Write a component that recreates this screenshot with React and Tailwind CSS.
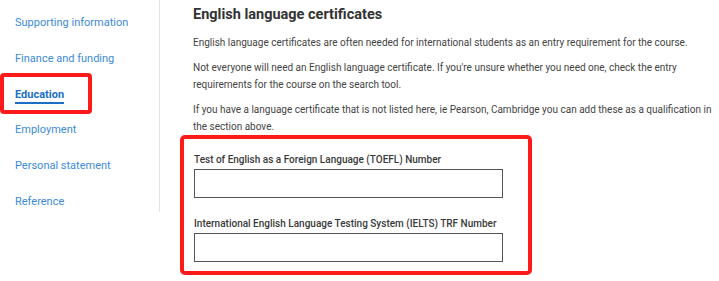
import React from "react";

const navItems = [
  "Supporting information",
  "Finance and funding",
  "Education",
  "Employment",
  "Personal statement",
  "Reference",
];

function Sidebar() {
  return (
    <aside className="w-[160px] shrink-0 self-start h-[212px] border-r border-[#e3e3e3] pl-[15px] pt-[12px]">
      <ul className="flex flex-col gap-[17.8px]">
        {navItems.map((item) =>
          item === "Education" ? (
            <li key={item} className="h-[18px] leading-[18px]">
              <a className="inline-block text-[11px] font-bold text-[#1a6fc4] border-b-2 border-[#1a6fc4] leading-[15px]">
                {item}
              </a>
            </li>
          ) : (
            <li key={item} className="h-[18px] leading-[18px]">
              <a className="text-[11px] text-[#3b8ad9]">{item}</a>
            </li>
          )
        )}
      </ul>
    </aside>
  );
}

function Field({ label }) {
  return (
    <div className="flex flex-col">
      <label className="text-[10px] font-medium text-[#3a3a3a] leading-[14px] mb-[2px]">
        {label}
      </label>
      <input
        type="text"
        className="w-[309px] h-[29px] border border-[#555] bg-white outline-none"
      />
    </div>
  );
}

export default function App() {
  return (
    <div
      className="relative w-[719px] h-[281px] bg-white overflow-hidden flex"
      style={{ fontFamily: "Roboto, 'Liberation Sans', sans-serif" }}
    >
      <Sidebar />
      <main className="pl-[33px] pt-[4px] w-[555px]">
        <h2 className="text-[14.5px] font-bold text-[#333] leading-[22px]">
          English language certificates
        </h2>
        <div className="mt-[8px] text-[10px] text-[#444] leading-[17px] flex flex-col gap-[8px]">
          <p>
            English language certificates are often needed for international
            students as an entry requirement for the course.
          </p>
          <p>
            Not everyone will need an English language certificate. If you're
            unsure whether you need one, check the entry requirements for the
            course on the search tool.
          </p>
          <p>
            If you have a language certificate that is not listed here, ie
            Pearson, Cambridge you can add these as a qualification in the
            section above.
          </p>
        </div>
        <div className="mt-[18px] pl-[1px] flex flex-col gap-[19px]">
          <Field label="Test of English as a Foreign Language (TOEFL) Number" />
          <Field label="International English Language Testing System (IELTS) TRF Number" />
        </div>
      </main>

      {/* annotation boxes */}
      <div className="absolute left-[0px] top-[73px] w-[92px] h-[41px] border-[4px] border-[#ff1a1a] rounded-[4px] pointer-events-none" />
      <div className="absolute left-[180px] top-[135px] w-[352px] h-[140px] border-[4px] border-[#ff1a1a] rounded-[5px] pointer-events-none" />
    </div>
  );
}
